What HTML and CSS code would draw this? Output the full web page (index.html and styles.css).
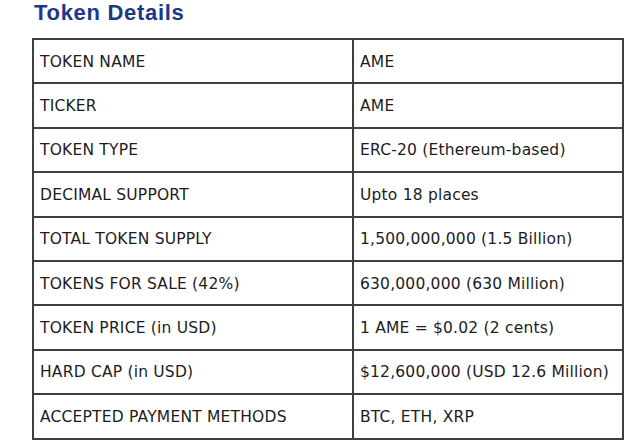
FILE: index.html
```html
<!DOCTYPE html>
<html>
<head>
<meta charset="utf-8">
<link rel="stylesheet" href="styles.css">
</head>
<body>
<div class="page">
  <h2 class="title">Token Details</h2>
  <table class="details">
    <tr><td class="key">TOKEN NAME</td><td>AME</td></tr>
    <tr><td class="key">TICKER</td><td>AME</td></tr>
    <tr><td class="key">TOKEN TYPE</td><td>ERC-20 (Ethereum-based)</td></tr>
    <tr><td class="key">DECIMAL SUPPORT</td><td>Upto 18 places</td></tr>
    <tr><td class="key">TOTAL TOKEN SUPPLY</td><td>1,500,000,000 (1.5 Billion)</td></tr>
    <tr><td class="key">TOKENS FOR SALE (42%)</td><td>630,000,000 (630 Million)</td></tr>
    <tr><td class="key">TOKEN PRICE (in USD)</td><td>1 AME = $0.02 (2 cents)</td></tr>
    <tr><td class="key">HARD CAP (in USD)</td><td>$12,600,000 (USD 12.6 Million)</td></tr>
    <tr><td class="key">ACCEPTED PAYMENT METHODS</td><td>BTC, ETH, XRP</td></tr>
  </table>
</div>
</body>
</html>
```
FILE: styles.css
```css
html, body {
  margin: 0;
  padding: 0;
  background: #ffffff;
}
.page {
  padding: 0 0 0 32px;
}
.title {
  margin: 0;
  padding: 0 0 0 2px;
  font-family: "Liberation Sans", Arial, sans-serif;
  font-weight: bold;
  font-size: 22px;
  letter-spacing: 0.7px;
  line-height: 25px;
  height: 28px;
  color: #1c3888;
}
.details {
  margin-top: 10px;
  border-collapse: collapse;
  width: 592px;
  font-family: "DejaVu Sans", Verdana, sans-serif;
  font-size: 15.5px;
  letter-spacing: 0.2px;
  color: #1c1c1c;
}
.details td {
  border: 2px solid #3f3f3f;
  height: 41.4px;
  padding: 1px 6px 0;
  vertical-align: middle;
}
.details td.key {
  width: 306px;
}
```
